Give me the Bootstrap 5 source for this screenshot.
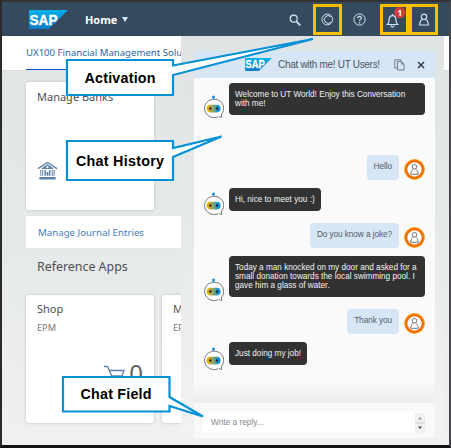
<!DOCTYPE html>
<html lang="en">
<head>
<meta charset="utf-8">
<meta name="viewport" content="width=device-width, initial-scale=1">
<title>Home</title>
<link href="https://cdn.jsdelivr.net/npm/bootstrap@5.3.0/dist/css/bootstrap.min.css" rel="stylesheet">
<style>
body{margin:0;overflow:hidden;background:#fff}
.shell{width:451px;height:448px;border:solid #111;border-width:2px 2px 3px 2px;border-left-color:#2b2b2d;border-right-color:#45474b;border-top-color:#333;background:linear-gradient(#dfe4e5,#e6e9ea 55%,#eff0f2);font-family:"Noto Sans",sans-serif;color:#4b4f54}
.topbar{height:34px;background:#354a5f;padding:0 11px 0 27px}
.home{font:700 10.9px "Noto Sans",sans-serif;color:#fff;margin-left:17px}
.caret{border:3.500px solid transparent;border-top:5px solid #d1e8ff;border-bottom:0;margin:1px 0 0 5px}
.tool{width:29px;height:31px;margin-top:1px}
.tool.hot{border:3px solid #ffbf00}
.help{margin-left:3px}
.bell{margin-left:6px}
.tabs{height:35px;background:#fff;padding-left:24px;border-bottom:1px solid #dadddd}
.tab-on{width:155px;height:34px;padding-top:8px;border-bottom:1px solid #0a5fc8;font-size:9.6px;line-height:18px;color:#2a66a5;white-space:nowrap}
.content{padding:11px 0 0 24px}
.tile{width:128px;height:128px;flex:none;background:#fff;border-radius:3px;box-shadow:0 0 3px #b9bdc0;padding:8px 11px;white-space:nowrap}
.tile-h{font-size:11px;line-height:13px}
.tile-sub{font-size:9.2px;line-height:12px;margin-top:7px;color:#74787c}
.bank{margin:auto 0 21px}
.apps .tile{padding-top:7px}
.cartline{margin-top:30px}
.count{font-size:24px;line-height:24px;margin-top:-3px;margin-left:3px;color:#5f6468}
.linkrow{width:200px;height:32px;margin-top:6px;background:#fff;border-radius:2px;padding:9px 12px;font-size:9.7px;line-height:16px;color:#3f80c4}
.group-h{font-size:12.4px;line-height:20px;margin:9px 0 18px 11px}
.side{left:179px;top:34px;width:263px;height:402px;background:linear-gradient(#dfe3e3,#e6e9ea 45%,#f1f2f4);padding:15px 9px 0 13px;font-family:"Liberation Sans",sans-serif}
.chat{height:387px;width:241px;background:#fafafa}
.chat-head{height:27px;background:#d6e6f5;padding-left:51px;color:#4c555e;font-size:10px}
.chat-t{margin-left:6px;letter-spacing:-.3px}
.closer{margin:0 10px 0 12px}
.log{height:325px;padding:5px 10px 0 9px;background:linear-gradient(#fafafa 93%,#ececec)}
.bot{width:21px;height:24px;flex:none;margin-right:5px}
.say{background:#323232;color:#f2f2f2;border-radius:4px;font-size:8.2px;line-height:9px;padding:7px 6px;white-space:nowrap}
.wide{width:197px}
.mine{background:#d6e6f5;color:#555d65;border-radius:4px;font-size:8.3px;letter-spacing:-.1px;line-height:9px;padding:7px 7px 9px;margin-right:5px;white-space:nowrap}
.ava{width:21px;height:21px;flex:none}
.s1{height:36px}.s2{height:28px;margin-top:33px}.s3{height:28px;margin-top:8px}
.s4{height:26px;margin-top:6px}.s5{height:46px;margin-top:8px}.s6{height:26px;margin-top:6px}.s7{height:29px;margin-top:8px}
.foot{height:35px;padding:9px 10px 4px 9px;background:#f9f9f9}
.field{height:21px;background:#fff;border-radius:3px;padding-left:8px;font-size:8.3px;color:#85898c}
.spin{width:10px;height:20px;background:#f0f0f0}
.notes{left:-2px;top:-2px;pointer-events:none}
</style>
<script src="https://cdn.jsdelivr.net/npm/bootstrap@5.3.0/dist/js/bootstrap.bundle.min.js"></script>
</head>
<body>
<svg width="0" height="0" class="position-absolute">
<defs>
<linearGradient id="eye"><stop offset=".1" stop-color="#f0ab00"/><stop offset=".5" stop-color="#7fa47a"/><stop offset=".85" stop-color="#0a8fe0"/></linearGradient>
<linearGradient id="blue" x2="0" y2="1"><stop stop-color="#00b0ea"/><stop offset="1" stop-color="#0f79c7"/></linearGradient>
<symbol id="sap" viewBox="0 0 39 19"><path d="M0 0h39L20 19H0z" fill="url(#blue)"/><text x="0.5" y="14.500" font-family="Liberation Sans,sans-serif" font-weight="700" font-size="15" textLength="28" lengthAdjust="spacingAndGlyphs" fill="#fff" stroke="#fff" stroke-width=".4">SAP</text></symbol>
<symbol id="bot" viewBox="0 0 21 24"><path d="M10.5 2v3" stroke="#1591dc"/><circle cx="10.5" cy="1.9" r="1.5" fill="#1591dc"/><path d="M18.5 19.3A9.6 9.2 0 1 0 15 21.8M18.5 19l.2 3.4-3-.9" fill="#fff" stroke="#74777a" stroke-width="1"/><rect x="3.6" y="9.8" width="14" height="7.6" rx="3.8" fill="url(#eye)"/><circle cx="7.3" cy="13.5" r="1.2" fill="#26231c"/><circle cx="14" cy="13.5" r="1.2" fill="#0e2c44"/></symbol>
<symbol id="ava" viewBox="0 0 21 21"><circle cx="10.5" cy="10.5" r="10.4" fill="#f6a31b"/><circle cx="10.5" cy="10.5" r="9.4" fill="#f06a00"/><circle cx="10.5" cy="10.5" r="7.2" fill="#fff"/><g fill="none" stroke="#777" stroke-width="1"><circle cx="10.500" cy="7.700" r="2.300"/><path d="M8.900 9.600C9.500 10.700 7 11.100 6.700 15.300H14.300C14 11.100 11.500 10.700 12.100 9.600"/></g></symbol>
</defs>
</svg>
<div class="shell position-relative overflow-hidden">
  <header class="topbar d-flex align-items-center">
    <svg width="39" height="19"><use href="#sap"/></svg>
    <span class="home">Home</span><span class="caret"></span>
    <div class="ms-auto d-flex align-items-center">
      <div class="tool d-flex align-items-center justify-content-center"><svg width="12" height="12" fill="none" stroke="#d6e4f2"><circle cx="4.700" cy="4.700" r="3.500" stroke-width="1.200"/><path d="M7.300 7.300l4 4" stroke-width="1.700"/></svg></div>
      <div class="tool hot d-flex align-items-center justify-content-center ms-1"><svg width="13" height="13" fill="none" stroke="#d6e4f2" stroke-width="1"><path d="M9.800 3.800A3.800 3.800 0 1 0 9.800 9.200"/><path d="M2.600 2.500A5.400 5.400 0 1 1 2.600 10.500M2.600 2.500A5.600 5.600 0 0 0 2.600 10.500"/></svg></div>
      <div class="tool help d-flex align-items-center justify-content-center"><svg width="13" height="13"><circle cx="6.500" cy="6.500" r="5.600" fill="none" stroke="#d6e4f2"/><path d="M4.700 5.200c0-2.600 3.800-2.300 3.600 0C8.200 6.500 6.500 6.300 6.500 8" fill="none" stroke="#d6e4f2" stroke-width="1.200"/><circle cx="6.500" cy="9.700" r=".8" fill="#d6e4f2"/></svg></div>
      <div class="tool hot bell d-flex"><svg width="23" height="25"><path d="M4.500 17.500c1.600-1.500 1.400-3 1.600-5C6.300 9.800 7.700 8.600 9.500 8.600s3.200 1.200 3.400 3.900c.2 2 .1 3.500 1.700 5zM8 18.300c0 2.500 3 2.500 3 0M9.500 7v1.500" fill="none" stroke="#d6e4f2" stroke-width="1.200"/><circle cx="16.800" cy="5.500" r="5.600" fill="#d23a41"/><text x="16.800" y="8.500" text-anchor="middle" font-size="8" font-weight="700" font-family="Noto Sans,sans-serif" fill="#fff">1</text></svg></div>
      <div class="tool hot d-flex align-items-center justify-content-center"><svg width="12" height="14" fill="none" stroke="#d6e4f2" stroke-width="1.200"><circle cx="6" cy="3.800" r="2.700"/><path d="M4.300 6.500C2 7.500 1.700 10 1.700 12h8.600c0-2-.3-4.500-2.600-5.500"/></svg></div>
    </div>
  </header>
  <nav class="tabs"><div class="tab-on">UX100 Financial Management Solu</div></nav>
  <main class="content">
    <div class="tile d-flex flex-column">
      <div class="tile-h">Manage Banks</div>
      <svg class="bank" width="21" height="20" viewBox="0 0 22 20" fill="#5b7fa6"><path d="M1 7.500L11 1l10 6.500" fill="none" stroke="#5b7fa6" stroke-width="1.300"/><path d="M5 7l6-4 6 4v1H5zM3.500 9h3v6h-3zM7.800 9h1.500v6H7.800zM12.700 9h1.500v6h-1.500zM15.500 9h3v6h-3zM10 11h2v4h-2zM2.500 16.300h17V19h-17z"/><circle cx="11" cy="6" r="1.200" fill="#fff"/><path d="M5 9v6M17 9v6" stroke="#fff"/></svg>
    </div>
    <div class="linkrow">Manage Journal Entries</div>
    <div class="group-h">Reference Apps</div>
    <div class="apps d-flex gap-2">
      <div class="tile">
        <div class="tile-h">Shop</div><div class="tile-sub">EPM</div>
        <div class="cartline d-flex justify-content-end"><svg width="23" height="24" fill="none" stroke="#5b7fa6" stroke-width="1.300"><path d="M1 2.500h3.500L10 15h9M6 6.500h15L19 12H8.500"/><circle cx="11" cy="18" r="1.500"/><circle cx="18" cy="18" r="1.500"/></svg><span class="count">0</span></div>
      </div>
      <div class="tile"><div class="tile-h">Manage</div><div class="tile-sub">EPM</div></div>
    </div>
  </main>
  <aside class="side position-absolute">
    <div class="chat">
      <div class="chat-head d-flex align-items-center">
        <svg width="27" height="13"><use href="#sap"/></svg>
        <span class="chat-t">Chat with me! UT Users!</span>
        <svg class="ms-auto" width="11" height="12" fill="none" stroke="#747d86"><path d="M3.500 2.500h4l2.500 2.500v6H3.500z"/><path d="M3 9H.8V.8h6v1.500M7.500 2.500V5H10"/></svg>
        <svg class="closer" width="8" height="8" stroke="#333c45" stroke-width="1.500"><path d="M1 1l6 6M7 1L1 7"/></svg>
      </div>
      <div class="log">
        <div class="s1 d-flex"><svg class="bot align-self-end"><use href="#bot"/></svg><div class="say wide align-self-start">Welcome to UT World! Enjoy this Conversation<br>with me!</div></div>
        <div class="s2 d-flex justify-content-end align-items-end"><div class="mine">Hello</div><svg class="ava"><use href="#ava"/></svg></div>
        <div class="s3 d-flex align-items-start"><svg class="bot align-self-end"><use href="#bot"/></svg><div class="say">Hi, nice to meet you :)</div></div>
        <div class="s4 d-flex justify-content-end align-items-end"><div class="mine">Do you know a joke?</div><svg class="ava"><use href="#ava"/></svg></div>
        <div class="s5 d-flex align-items-start"><svg class="bot align-self-end"><use href="#bot"/></svg><div class="say wide">Today a man knocked on my door and asked for a<br>small donation towards the local swimming pool. I<br>gave him a glass of water.</div></div>
        <div class="s6 d-flex justify-content-end align-items-end"><div class="mine">Thank you</div><svg class="ava"><use href="#ava"/></svg></div>
        <div class="s7 d-flex align-items-start"><svg class="bot align-self-end"><use href="#bot"/></svg><div class="say">Just doing my job!</div></div>
      </div>
      <div class="foot"><div class="field d-flex align-items-center">Write a reply...<svg class="spin ms-auto" viewBox="0 0 10 20"><path d="M0 10h10" stroke="#ccc"/><path d="M3 6.500l2-2.500 2 2.500z" fill="#999"/><path d="M3 13.500l2 2.500 2-2.500z" fill="#444"/></svg></div></div>
    </div>
  </aside>
  <svg class="notes position-absolute" width="451" height="448" fill="#fff" stroke="#0491d6" stroke-width="2.200" font-family="Liberation Sans,sans-serif" font-size="14.300" font-weight="700">
    <path d="M67 60H173V65.500L313 39L173 75V95H67z"/>
    <path d="M67 141H173V148L221.500 136.500L173 157V180H67z"/>
    <path d="M63 377H169.500V397L203 416.500L169.500 406V411.500H63z"/>
    <g fill="#000" stroke="none"><text x="84.500" y="83" textLength="71">Activation</text><text x="76" y="166" textLength="88">Chat History</text><text x="80.500" y="399" textLength="71">Chat Field</text></g>
  </svg>
</div>
</body>
</html>
